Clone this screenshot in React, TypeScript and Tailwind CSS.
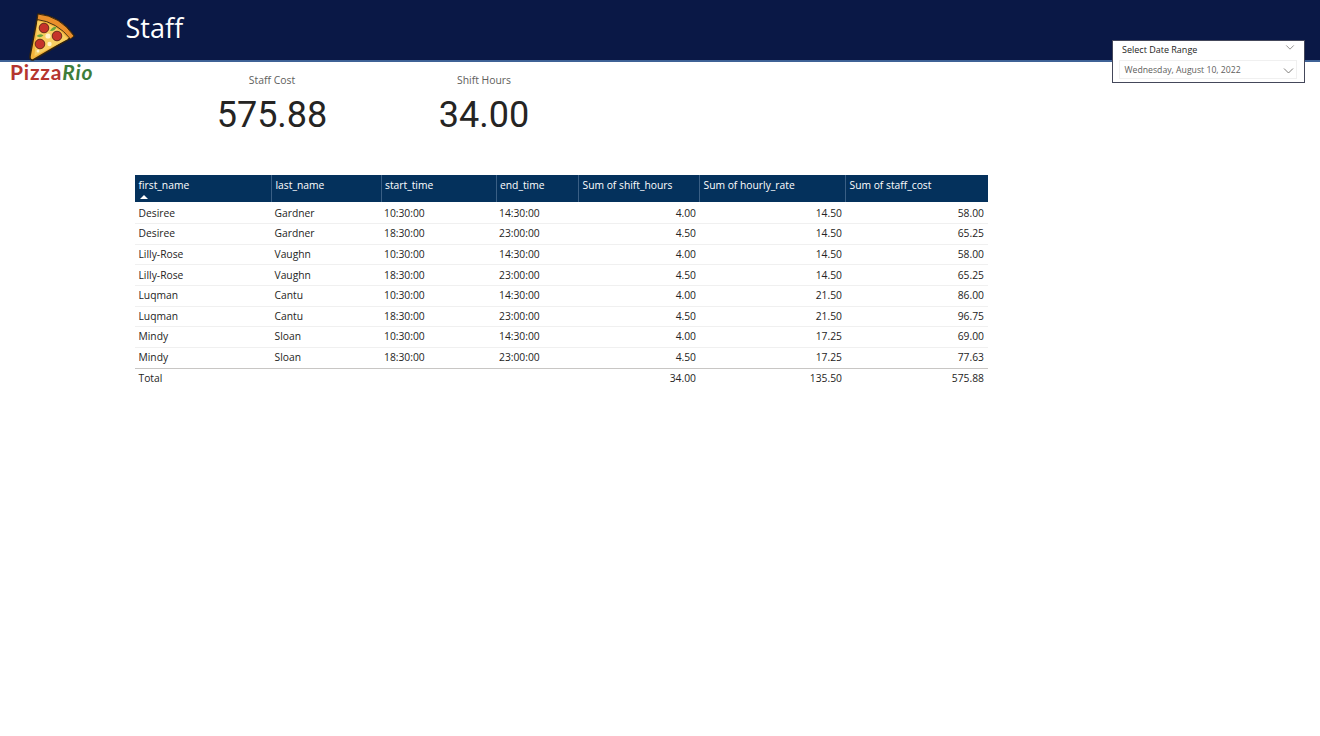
const rows = [
  ["Desiree", "Gardner", "10:30:00", "14:30:00", "4.00", "14.50", "58.00"],
  ["Desiree", "Gardner", "18:30:00", "23:00:00", "4.50", "14.50", "65.25"],
  ["Lilly-Rose", "Vaughn", "10:30:00", "14:30:00", "4.00", "14.50", "58.00"],
  ["Lilly-Rose", "Vaughn", "18:30:00", "23:00:00", "4.50", "14.50", "65.25"],
  ["Luqman", "Cantu", "10:30:00", "14:30:00", "4.00", "21.50", "86.00"],
  ["Luqman", "Cantu", "18:30:00", "23:00:00", "4.50", "21.50", "96.75"],
  ["Mindy", "Sloan", "10:30:00", "14:30:00", "4.00", "17.25", "69.00"],
  ["Mindy", "Sloan", "18:30:00", "23:00:00", "4.50", "17.25", "77.63"],
];

const headers = [
  "first_name",
  "last_name",
  "start_time",
  "end_time",
  "Sum of shift_hours",
  "Sum of hourly_rate",
  "Sum of staff_cost",
];

const gridCols = "grid grid-cols-[136px_109.5px_115px_82.5px_121px_146px_143px]";

function PizzaLogo() {
  return (
    <svg viewBox="25 10 52 52" className="h-[52px] w-[52px]">
      {/* slice body */}
      <path d="M38 14 Q60 16 74 36 L33 60 Q29.5 60.5 30 56 Z" fill="#f4b43c" stroke="#33240f" strokeWidth="1.6" strokeLinejoin="round" />
      {/* crust */}
      <path d="M38 14 Q60 16 74 36 L70.5 39 Q57 22 37.2 19.5 Z" fill="#e98f2b" stroke="#33240f" strokeWidth="0.9" strokeLinejoin="round" />
      {/* cheese */}
      <path d="M37.5 21 Q56 24 68 39 L34.5 56 Z" fill="#f8cf62" />
      <circle cx="44" cy="28" r="4.8" fill="#c5332a" stroke="#5c2415" strokeWidth="0.9" />
      <circle cx="57" cy="36" r="4.8" fill="#c5332a" stroke="#5c2415" strokeWidth="0.9" />
      <circle cx="40" cy="44" r="4.8" fill="#c5332a" stroke="#5c2415" strokeWidth="0.9" />
      <path d="M50 31 Q53 26 56.5 27 Q55 31.5 50 31 Z" fill="#6aa53a" />
      <path d="M36.5 36 Q40 33 43.5 35.5 Q40 38.5 36.5 36 Z" fill="#6aa53a" />
      <circle cx="48" cy="36" r="2.6" fill="#fff1c9" />
      <circle cx="49.5" cy="44" r="2.2" fill="#fff1c9" />
      <circle cx="38" cy="51" r="1.5" fill="#fff1c9" />
    </svg>
  );
}

function Chevron({ className }: { className: string }) {
  return (
    <svg viewBox="0 0 10 6" className={className} fill="none" stroke="#605e5c" strokeWidth="0.8">
      <path d="M0.5 0.5 L5 5 L9.5 0.5" />
    </svg>
  );
}

function Kpi({ label, value, width }: { label: string; value: string; width: string }) {
  return (
    <div className={`flex flex-col items-center ${width}`}>
      <p className="text-[10.4px] leading-[14px] text-[#605e5c]">{label}</p>
      <p className="mt-[6px] font-['Roboto',sans-serif] text-[36px] leading-[44px] text-[#252423]">
        {value}
      </p>
    </div>
  );
}

export default function App() {
  return (
    <div className="relative h-[736px] w-[1320px] overflow-hidden bg-white font-['Open_Sans','Noto_Sans',sans-serif]">
      <header className="flex h-[62px] items-start border-b-2 border-[#3f6296] bg-[#0a1846] pl-[25px] pt-[10px]">
        <PizzaLogo />
        <h1 className="ml-[48.5px] -mt-[1px] text-[27px] leading-[38px] text-white">Staff</h1>
      </header>

      <div className="flex">
        <div className="w-[135px] shrink-0 pl-[10px]">
          <p className="font-['Lato',sans-serif] text-[21px] font-bold leading-[19px] tracking-[0.8px] whitespace-nowrap">
            <span className="text-[#b5352f]">Pizza</span>
            <span className="italic text-[#3d7d3a]">Rio</span>
          </p>
        </div>

        <main>
          <div className="flex pl-[82px] pt-[11px]">
            <Kpi label="Staff Cost" value="575.88" width="w-[110px]" />
            <Kpi label="Shift Hours" value="34.00" width="ml-[102px] w-[110px]" />
          </div>

          <div className="mt-[38px] w-[853px] text-[10.3px] text-[#252423]">
            <div className={`${gridCols} mb-[1.5px] h-[27px] bg-[#04315c] text-white`}>
              {headers.map((h, i) => (
                <div key={h} className={`relative pl-[3.5px] pt-[2px] leading-[16px] whitespace-nowrap ${i > 0 ? "border-l border-[#3a5f85]" : ""}`}>
                  {h}
                  {i === 0 && (
                    <span className="mt-[2px] ml-[1px] block h-0 w-0 border-x-[4px] border-b-[4px] border-x-transparent border-b-white" />
                  )}
                </div>
              ))}
            </div>

            {rows.map((row, r) => (
              <div key={r} className={`${gridCols} h-[20.65px] items-center border-b ${r === 7 ? "border-[#c8c6c4]" : "border-[#f0f0f0]"}`}>
                {row.map((cell, c) => (
                  <div key={c} className={`whitespace-nowrap ${c > 3 ? (c === 6 ? "pr-[4px] text-right" : "pr-[3px] text-right") : "pl-[3.5px]"}`}>
                    {cell}
                  </div>
                ))}
              </div>
            ))}

            <div className={`${gridCols} h-[21px] items-center`}>
              <div className="pl-[3.5px]">Total</div>
              <div />
              <div />
              <div />
              <div className="pr-[3px] text-right">34.00</div>
              <div className="pr-[3px] text-right">135.50</div>
              <div className="pr-[4px] text-right">575.88</div>
            </div>
          </div>
        </main>
      </div>

      <div className="absolute left-[1112px] top-[40px] h-[43px] w-[193px] border border-[#44475a] bg-white pl-[6px] pr-[7px] font-['Open_Sans',sans-serif]">
        <div className="flex h-[19px] items-start justify-between pl-[3px] pr-[2px] pt-[3px] text-[9px] leading-[12px] text-[#252423]">
          <span>Select Date Range</span>
          <Chevron className="mt-[1px] h-[5px] w-[10px]" />
        </div>
        <div className="flex h-[19px] items-center justify-between border border-[#f0f0f0] pl-[4.5px] pr-[1px] pt-[2px] text-[8.7px] text-[#605e5c]">
          <span>Wednesday, August 10, 2022</span>
          <Chevron className="h-[6px] w-[13px]" />
        </div>
      </div>
    </div>
  );
}
